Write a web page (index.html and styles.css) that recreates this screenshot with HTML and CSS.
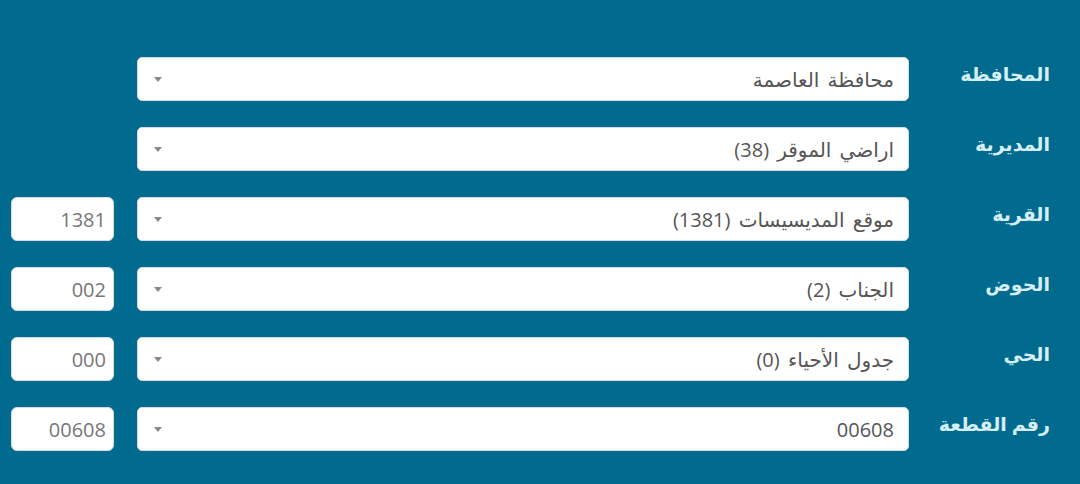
FILE: index.html
```html
<!DOCTYPE html>
<html lang="ar" dir="rtl">

<head>
    <meta charset="UTF-8">
    <meta name="viewport" content="width=device-width, initial-scale=1.0">
    <title>بيانات القطعة</title>
    <link rel="stylesheet" href="styles.css">
</head>

<body>
    <div class="form">
        <div class="row">
            <label class="label">المحافظة</label>
            <div class="select"><span class="value">محافظة العاصمة</span><span class="arrow"></span></div>
        </div>
        <div class="row">
            <label class="label">المديرية</label>
            <div class="select"><span class="value">اراضي الموقر (38)</span><span class="arrow"></span></div>
        </div>
        <div class="row">
            <label class="label">القرية</label>
            <div class="select"><span class="value">موقع المديسيسات (1381)</span><span class="arrow"></span></div>
            <input type="text" class="code" value="1381">
        </div>
        <div class="row">
            <label class="label">الحوض</label>
            <div class="select"><span class="value">الجناب (2)</span><span class="arrow"></span></div>
            <input type="text" class="code" value="002">
        </div>
        <div class="row">
            <label class="label">الحي</label>
            <div class="select"><span class="value">جدول الأحياء (0)</span><span class="arrow"></span></div>
            <input type="text" class="code" value="000">
        </div>
        <div class="row">
            <label class="label">رقم القطعة</label>
            <div class="select"><span class="value">00608</span><span class="arrow"></span></div>
            <input type="text" class="code" value="00608">
        </div>
    </div>
</body>

</html>
```

FILE: styles.css
```css
body {
    font-family: 'Open Sans', 'DejaVu Sans', sans-serif;
    background-color: #006a8f;
    margin: 0;
    padding: 0;
}

.form {
    display: flex;
    flex-direction: column;
    gap: 26px;
    padding: 57px 30px 0 0;
}

.row {
    display: flex;
    align-items: flex-start;
    height: 44px;
}

.label {
    width: 141px;
    padding-top: 4px;
    font-size: 19px;
    font-weight: 700;
    color: #d6eef6;
    /* light blue label text */
}

.select {
    position: relative;
    box-sizing: border-box;
    width: 772px;
    height: 44px;
    display: flex;
    align-items: center;
    padding: 0 14px;
    background-color: #ffffff;
    border: 1px solid #d5dde2;
    border-radius: 5px;
    font-size: 20px;
    word-spacing: 3px;
    color: #555555;
}

.value {
    flex: 1;
}

.arrow {
    width: 0;
    height: 0;
    border-left: 4px solid transparent;
    border-right: 4px solid transparent;
    border-top: 5px solid #888888;
    margin-left: 2px;
}

.code {
    box-sizing: border-box;
    width: 103px;
    height: 44px;
    margin-right: 23px;
    padding: 0 7px;
    background-color: #ffffff;
    border: 1px solid #d5dde2;
    border-radius: 6px;
    font-family: 'Open Sans', sans-serif;
    font-size: 20px;
    color: #777777;
    text-align: right;
    direction: ltr;
    outline: none;
}
```
